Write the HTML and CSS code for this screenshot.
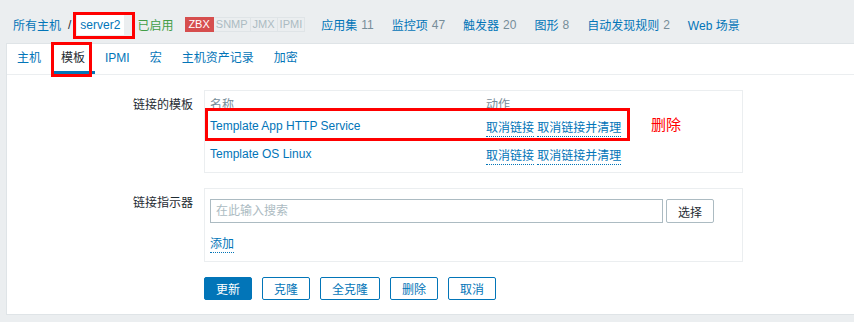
FILE: index.html
```html
<!DOCTYPE html>
<html lang="zh">
<head>
    <meta charset="UTF-8">
    <title>主机 | 模板</title>
    <link rel="stylesheet" href="styles.css">
</head>
<body>
    <header class="top">
        <a href="#">所有主机</a>
        <span class="sep">/</span>
        <span class="current">server2</span>
        <span class="enabled">已启用</span>
        <div class="badges">
            <span class="badge zbx">ZBX</span><span class="badge">SNMP</span><span class="badge">JMX</span><span class="badge">IPMI</span>
        </div>
        <nav class="host-nav">
            <a href="#">应用集</a><span class="count">11</span>
            <a href="#">监控项</a><span class="count">47</span>
            <a href="#">触发器</a><span class="count">20</span>
            <a href="#">图形</a><span class="count">8</span>
            <a href="#">自动发现规则</a><span class="count">2</span>
            <a href="#">Web 场景</a>
        </nav>
        <!-- annotation -->
        <div class="mark mark-host"></div>
    </header>

    <div class="panel">
        <div class="tabs">
            <a href="#">主机</a>
            <a href="#" class="active">模板</a>
            <a href="#">IPMI</a>
            <a href="#">宏</a>
            <a href="#">主机资产记录</a>
            <a href="#">加密</a>
            <div class="mark mark-tab"></div>
        </div>

        <div class="form">
            <div class="form-row">
                <label>链接的模板</label>
                <div class="box linked">
                    <div class="tbl-row tbl-head">
                        <span class="col-name">名称</span>
                        <span>动作</span>
                    </div>
                    <div class="tbl-row">
                        <span class="col-name"><a href="#" class="plain">Template App HTTP Service</a></span>
                        <span><a href="#" class="dotted">取消链接</a> <a href="#" class="dotted">取消链接并清理</a></span>
                    </div>
                    <div class="tbl-row">
                        <span class="col-name"><a href="#" class="plain">Template OS Linux</a></span>
                        <span><a href="#" class="dotted">取消链接</a> <a href="#" class="dotted">取消链接并清理</a></span>
                    </div>
                    <div class="mark mark-row"></div>
                    <span class="note">删除</span>
                </div>
            </div>

            <div class="form-row">
                <label>链接指示器</label>
                <div class="box indicators">
                    <div class="search">
                        <input type="text" placeholder="在此输入搜索">
                        <button class="btn-grey">选择</button>
                    </div>
                    <a href="#" class="dotted">添加</a>
                </div>
            </div>

            <div class="actions">
                <button class="btn-main">更新</button>
                <button class="btn-alt">克隆</button>
                <button class="btn-alt wide">全克隆</button>
                <button class="btn-alt">删除</button>
                <button class="btn-alt">取消</button>
            </div>
        </div>
    </div>
</body>
</html>
```

FILE: styles.css
```css
body {
    margin: 0;
    background-color: #ebeef0;
    font-family: "Liberation Sans", "Noto Sans CJK SC", sans-serif;
    font-size: 12px;
    color: #1f2c33;
    height: 322px;
    overflow: hidden;
}
a {
    color: #0275b8;
    text-decoration: none;
}
.mark {
    position: absolute;
    border: 3px solid #ff0000;
    pointer-events: none;
}

/* top breadcrumbs */
.top {
    position: relative;
    display: flex;
    align-items: center;
    height: 37px;
    padding: 6px 0 0 13px;
}
.sep {
    margin: 0 6px 0 7px;
}
.current {
    background: #ffffff;
    padding: 3px 4px 3px 3px;
    line-height: 14px;
    color: #0275b8;
}
.enabled {
    color: #429e47;
    margin-left: 13px;
}
.badges {
    display: flex;
    margin-left: 12px;
}
.badge {
    display: inline-block;
    height: 13px;
    line-height: 13px;
    padding: 0 2px;
    font-size: 11px;
    color: #acbbc2;
    border: 1px solid #dfe4e7;
    border-left: none;
}
.badge.zbx {
    background-color: #d64e4e;
    border-color: #d64e4e;
    color: #ffffff;
    padding: 0 3px;
}
.host-nav {
    margin-left: 16px;
    display: flex;
    align-items: center;
}
.host-nav .count {
    color: #768d99;
    margin: 0 18px 0 4px;
}
.mark-host {
    left: 73px;
    top: 12px;
    width: 56px;
    height: 21px;
}

/* panel */
.panel {
    margin-left: 6px;
    background: #ffffff;
    border: 1px solid #dfe4e7;
    border-right: none;
    height: 270px;
}
.tabs {
    position: relative;
    display: flex;
    height: 30px;
    border-bottom: 1px solid #ebeef0;
}
.tabs a {
    padding: 0 10px;
    line-height: 29px;
    border-bottom: 3px solid transparent;
    height: 27px;
}
.tabs a.active {
    color: #1f2c33;
    border-bottom-color: #0275b8;
}
.mark-tab {
    left: 44px;
    top: -2px;
    width: 35px;
    height: 29px;
}

.form {
    padding-top: 15px;
}
.form-row {
    display: flex;
    margin-bottom: 15px;
}
.form-row label {
    width: 186px;
    text-align: right;
    padding-right: 11px;
    padding-top: 5px;
}
.box {
    position: relative;
    width: 527px;
    border: 1px solid #ebeef0;
    padding: 3px 5px 4px;
}
.tbl-row {
    display: flex;
    align-items: center;
    height: 28px;
}
.tbl-row.tbl-head {
    height: 18px;
    color: #768d99;
}
.col-name {
    width: 276px;
}
.dotted {
    border-bottom: 1px dotted #0275b8;
    padding-bottom: 1px;
}
.mark-row {
    left: 0;
    top: 17px;
    width: 419px;
    height: 27px;
}
.note {
    position: absolute;
    left: 446px;
    top: 22px;
    color: #ff0000;
    font-size: 15px;
}

.indicators {
    padding: 10px 5px 10px;
}
.search {
    display: flex;
    margin-bottom: 11px;
}
.search input {
    width: 441px;
    height: 22px;
    border: 1px solid #acbbc2;
    padding: 0 5px;
    font-family: inherit;
    font-size: 12px;
    margin: 0;
}
.search input::placeholder {
    color: #acbbc2;
}
button {
    font-family: inherit;
    font-size: 12px;
    height: 24px;
    cursor: pointer;
    margin: 0;
}
.btn-grey {
    margin-left: 3px;
    width: 48px;
    background: #ffffff;
    color: #1f2c33;
    border: 1px solid #acbbc2;
    border-radius: 2px;
}
.actions {
    display: flex;
    gap: 10px;
    padding-left: 197px;
    margin-top: 0;
}
.actions button {
    width: 48px;
    height: 23px;
    border-radius: 2px;
    padding: 0;
}
.btn-main {
    background: #0275b8;
    border: 1px solid #0275b8;
    color: #ffffff;
}
.btn-alt {
    background: #ffffff;
    border: 1px solid #0275b8;
    color: #0275b8;
}
.actions .wide {
    width: 60px;
}
```
